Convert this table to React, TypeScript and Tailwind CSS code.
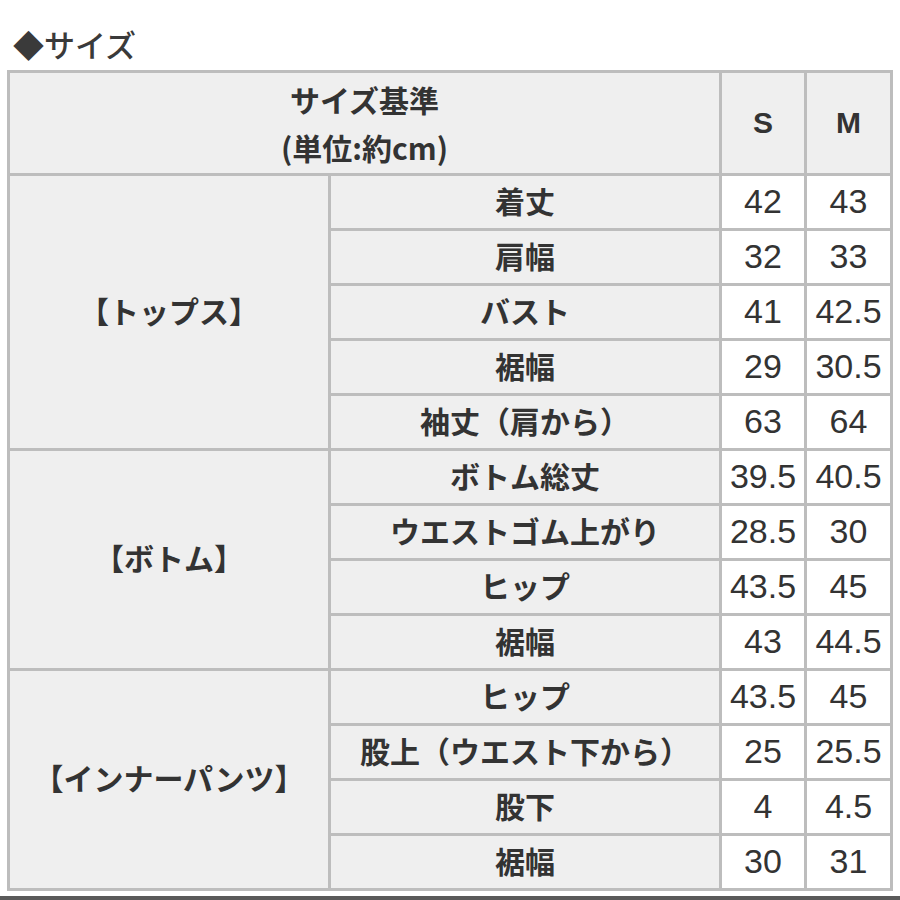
import React from "react";

const groups = [
  {
    name: "【トップス】",
    rows: [
      ["着丈", "42", "43"],
      ["肩幅", "32", "33"],
      ["バスト", "41", "42.5"],
      ["裾幅", "29", "30.5"],
      ["袖丈（肩から）", "63", "64"],
    ],
  },
  {
    name: "【ボトム】",
    rows: [
      ["ボトム総丈", "39.5", "40.5"],
      ["ウエストゴム上がり", "28.5", "30"],
      ["ヒップ", "43.5", "45"],
      ["裾幅", "43", "44.5"],
    ],
  },
  {
    name: "【インナーパンツ】",
    rows: [
      ["ヒップ", "43.5", "45"],
      ["股上（ウエスト下から）", "25", "25.5"],
      ["股下", "4", "4.5"],
      ["裾幅", "30", "31"],
    ],
  },
];

const jp = "font-['Noto_Sans_CJK_JP',sans-serif]";
const num = "font-['Liberation_Sans','Noto_Sans_CJK_JP',sans-serif]";

export default function App() {
  return (
    <div className="w-[900px] h-[900px] bg-white text-[#333] flex flex-col relative overflow-hidden">
      <div className={`${jp} h-[70px] pl-[13px] pt-[23px] text-[31px] leading-[42px] font-medium text-[#3a3a3a]`}>
        ◆サイズ
      </div>
      <table className="ml-[7px] w-[885px] table-fixed border-collapse border-[3px] border-[#bdbdbd]">
        <colgroup>
          <col className="w-[321px]" />
          <col className="w-[391px]" />
          <col className="w-[85px]" />
          <col className="w-[86px]" />
        </colgroup>
        <thead>
          <tr className="h-[103px]">
            <th colSpan={2} className={`${jp} bg-[#efefef] border-[3px] border-[#bdbdbd] text-[30px] leading-[48px] font-bold text-center align-middle`}>
              サイズ基準
              <br />
              (単位:約cm)
            </th>
            <th className={`${num} bg-[#efefef] border-[3px] border-[#bdbdbd] text-[30px] pb-[2px] font-bold`}>S</th>
            <th className={`${num} bg-[#efefef] border-[3px] border-[#bdbdbd] text-[30px] pb-[2px] font-bold`}>M</th>
          </tr>
        </thead>
        <tbody>
          {groups.map((g) =>
            g.rows.map((r, i) => (
              <tr key={g.name + i} className="h-[55px]">
                {i === 0 && (
                  <td
                    rowSpan={g.rows.length}
                    className={`${jp} bg-[#efefef] border-[3px] border-[#bdbdbd] text-[30px] pb-[4px] font-bold text-center align-middle`}
                  >
                    {g.name}
                  </td>
                )}
                <td className={`${jp} bg-[#efefef] border-[3px] border-[#bdbdbd] text-[30px] leading-[40px] pb-[5px] font-bold text-center align-middle`}>
                  {r[0]}
                </td>
                <td className={`${num} bg-white border-[3px] border-[#bdbdbd] text-[34px] leading-[40px] pb-[3px] text-center align-middle`}>
                  {r[1]}
                </td>
                <td className={`${num} bg-white border-[3px] border-[#bdbdbd] text-[34px] leading-[40px] pb-[3px] text-center align-middle`}>
                  {r[2]}
                </td>
              </tr>
            ))
          )}
        </tbody>
      </table>
      <div className="absolute left-0 right-0 bottom-0 h-[4px] bg-[#5a5a5a]" />
    </div>
  );
}
